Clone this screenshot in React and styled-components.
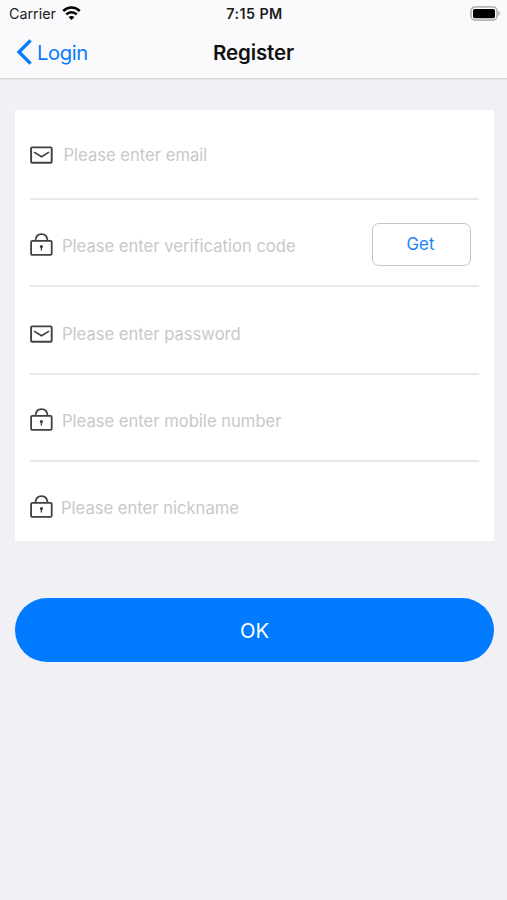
// Libraries
import React from 'react';
import styled, { createGlobalStyle } from 'styled-components';

const GlobalStyle = createGlobalStyle`
	* {
		box-sizing: border-box;
	}

	body {
		margin: 0;
		background-color: #f0f0f5;
		font-family: Inter, "Liberation Sans", sans-serif;
		overflow: hidden;
	}
`;

const Screen = styled.div`
	height: 900px;
	background-color: #f0f0f5;
`;

const Header = styled.header`
	height: 79px;
	background-color: #fafafc;
	border-bottom: 1px solid #d9d9dc;
	box-shadow: 0 1px 0 #e6e6ea;
`;

const StatusBar = styled.div`
	display: grid;
	grid-template-columns: 1fr auto 1fr;
	align-items: center;
	height: 27px;
	padding: 0 7px 0 9px;

	color: #1c1c1e;
	font-size: 14.3px;
`;

const Carrier = styled.div`
	display: flex;
	align-items: center;
	gap: 6px;
`;

const Clock = styled.div`
	font-weight: 600;
	letter-spacing: 0.45px;
`;

const Battery = styled.svg`
	justify-self: end;
`;

const NavBar = styled.nav`
	display: grid;
	grid-template-columns: 1fr auto 1fr;
	align-items: center;
	height: 50px;
	padding: 0 16px;
`;

const BackButton = styled.button`
	display: flex;
	align-items: center;
	justify-self: start;
	gap: 4px;
	padding: 0;

	border: 0;
	background: none;
	color: #067bfb;
	font: 400 20.2px Inter, sans-serif;
	letter-spacing: -0.4px;
`;

const Title = styled.h1`
	margin: 0;
	color: #111;
	font-size: 20.5px;
	font-weight: 600;
	letter-spacing: -0.15px;
`;

const Form = styled.form`
	padding: 31px 13px 0 15px;
`;

const Card = styled.div`
	padding: 0 15px;
	background-color: #fff;
`;

const Row = styled.div`
	display: flex;
	align-items: center;
	height: ${props => props.$height}px;
	padding-top: ${props => props.$top}px;
	border-bottom: ${props => props.$last ? "0" : "2px solid #e9e9eb"};

	> svg {
		flex: none;
	}
`;

const Input = styled.input`
	flex: 1;
	min-width: 0;
	height: 30px;
	margin: ${props => props.$drop}px 0 0 ${props => props.$gap}px;
	padding: 0;

	border: 0;
	outline: 0;
	background: none;
	color: #222;
	font: 400 16.6px Inter, sans-serif;

	&::placeholder {
		color: #c8c8ca;
		opacity: 1;
	}
`;

const GetButton = styled.button`
	width: 99px;
	height: 43px;
	margin-right: 8px;
	padding: 0 8px 0 6px;

	border: 1.5px solid #c6c6c8;
	border-radius: 7px;
	background-color: #fff;
	color: #1a84f7;
	font: 400 16.8px Inter, sans-serif;
`;

const SubmitButton = styled.button`
	display: block;
	width: 100%;
	height: 64px;
	margin-top: 57px;

	border: 0;
	border-radius: 32px;
	background-color: #007bff;
	color: #fff;
	font: 400 20.3px Inter, sans-serif;
`;

const MailIcon = () => (
	<svg width="23" height="18" viewBox="0 0 23 18" fill="none" stroke="#414143" strokeWidth="1.9" strokeLinejoin="round">
		<rect x="1.1" y="1.4" width="20.6" height="15.4" rx="1" />
		<path d="M4 6.1l7.6 4.7L19 6.1" strokeWidth="1.7" />
	</svg>
);

const LockIcon = () => (
	<svg width="23" height="23" viewBox="0 0 23 23" fill="none" stroke="#414143" strokeWidth="1.8">
		<rect x="1.1" y="7.9" width="20.6" height="14" rx="1.2" />
		<path d="M5.4 7.7C5.7 3.7 8.1 1.2 11.5 1.2s5.8 2.5 6.1 6.5" />
		<circle cx="11.4" cy="13.6" r="1.6" fill="#414143" stroke="none" />
		<path d="M11.4 13.6v4" strokeWidth="1.3" />
	</svg>
);

const WifiIcon = () => (
	<svg width="19" height="15" viewBox="0 0 19 15" fill="none" stroke="#000" strokeWidth="2.5">
		<path d="M1.2 5C5.9 .4 13.1 .4 17.8 5" />
		<path d="M4.2 8.3c3-2.9 7.6-2.9 10.6 0" />
		<path d="M9.5 13.9l-2.9-2.9c1.6-1.5 4.2-1.5 5.8 0z" fill="#000" stroke="none" />
	</svg>
);

const fields = [
	{ name: "email", Icon: MailIcon, height: 90, top: 1, gap: 10.5, drop: 0 },
	{ name: "verification code", Icon: LockIcon, height: 87, top: 3, gap: 9, drop: 4, button: true },
	{ name: "password", Icon: MailIcon, height: 88, top: 8, gap: 9, drop: 0 },
	{ name: "mobile number", Icon: LockIcon, height: 87, top: 3, gap: 9, drop: 4 },
	{ name: "nickname", Icon: LockIcon, height: 79, top: 9, gap: 8, drop: 4 }
];

export default class App extends React.Component {

	render() {
		return (
			<Screen>
				<GlobalStyle />
				<Header>
					<StatusBar>
						<Carrier>
							Carrier
							<WifiIcon />
						</Carrier>
						<Clock>7:15 PM</Clock>
						<Battery width="30" height="15" viewBox="0 0 30 15">
							<rect x="1" y=".9" width="26" height="13.2" rx="4" fill="#fff" stroke="#b5b5b7" strokeWidth="1.7" />
							<rect x="3" y="2.9" width="22" height="9.4" rx="1.8" fill="#000" />
							<path d="M28.4 5v5c2-.9 2-4.1 0-5z" fill="#aaa" />
						</Battery>
					</StatusBar>
					<NavBar>
						<BackButton type="button">
							<svg width="17" height="26" viewBox="0 0 17 26" fill="none" stroke="currentColor" strokeWidth="3.4">
								<path d="M14.6 1.4L3 13l11.6 11.6" />
							</svg>
							Login
						</BackButton>
						<Title>Register</Title>
					</NavBar>
				</Header>
				<Form>
					<Card>
						{fields.map(({ name, Icon, height, top, gap, drop, button }, index) => (
							<Row key={name} $height={height} $top={top} $last={index === fields.length - 1}>
								<Icon />
								<Input placeholder={"Please enter " + name} $gap={gap} $drop={drop} />
								{button && <GetButton type="button">Get</GetButton>}
							</Row>
						))}
					</Card>
					<SubmitButton type="button">OK</SubmitButton>
				</Form>
			</Screen>
		);
	}
}
